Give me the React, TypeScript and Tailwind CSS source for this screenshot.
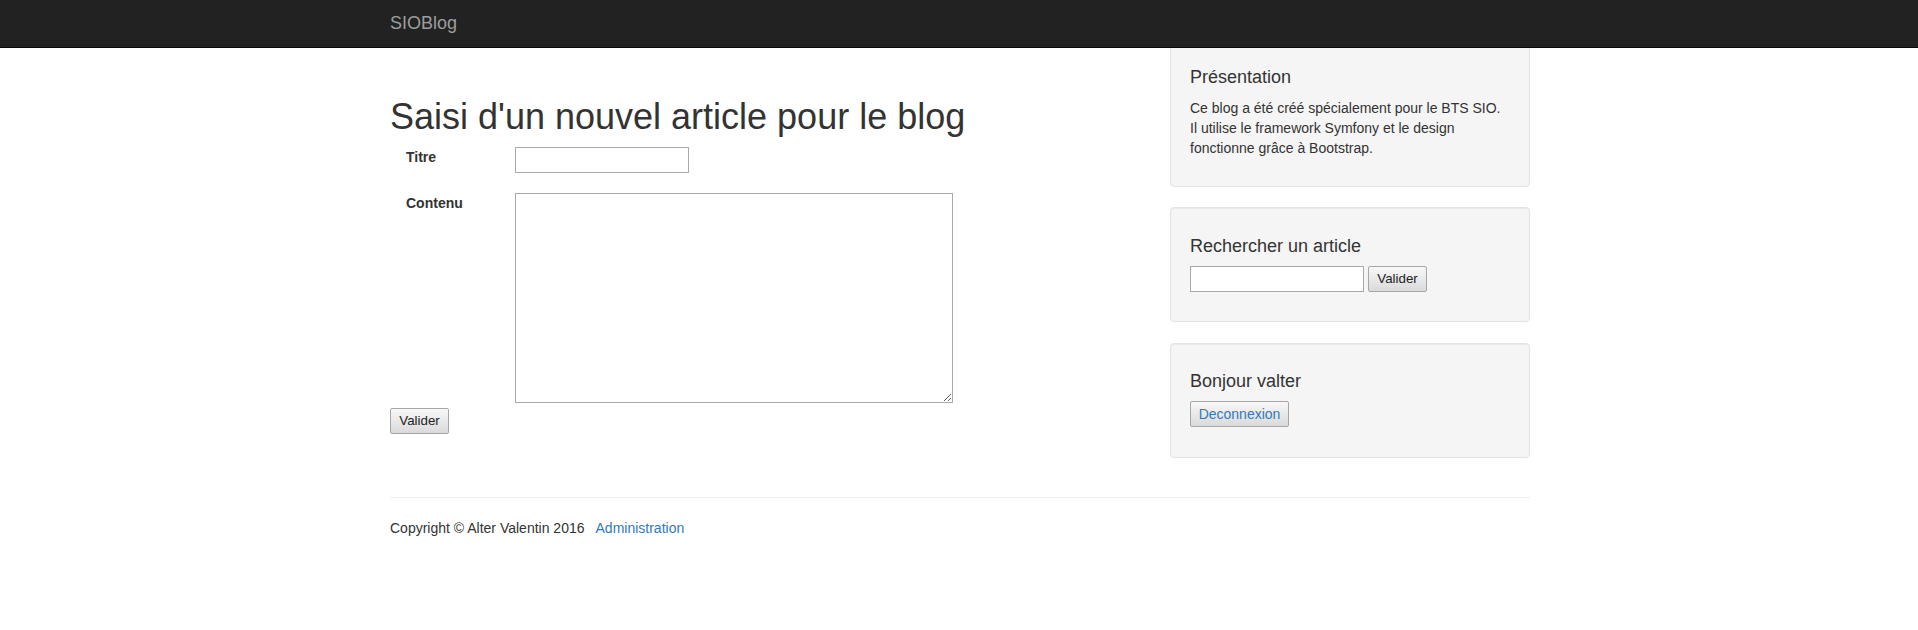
import React from "react";

const btn =
  "bg-linear-to-b from-[#f8f8f8] to-[#dadada] border border-[#a6a6a6] rounded-[2px] flex items-center justify-center leading-none";

const well =
  "bg-[#f5f5f5] border border-[#e3e3e3] rounded-[4px] shadow-[inset_0_1px_1px_rgba(0,0,0,0.05)] px-[19px]";

export default function App() {
  return (
    <div className="font-['Liberation_Sans',Arial,sans-serif] text-[14px] text-[#333] bg-white min-h-[630px]">
      <nav className="fixed top-0 inset-x-0 h-[48px] bg-[#222] border-b border-[#080808] z-10">
        <div className="pl-[2px]">
          <div className="w-[1140px] mx-auto h-[47px] flex items-center">
            <span className="text-[18px] text-[#9d9d9d]">SIOBlog</span>
          </div>
        </div>
      </nav>

      <div className="pl-[2px]">
        <div className="w-[1140px] mx-auto pt-[37px]">
          <div className="flex items-start gap-[31px]">
            <main className="w-[749px] pt-[60px]">
              <h1 className="text-[36px] leading-[39.6px] mb-[10px] text-[#333]">
                Saisi d'un nouvel article pour le blog
              </h1>
              <div className="flex items-start">
                <label className="w-[125px] pl-[16px] mt-[2px] text-[14px] leading-[16px] font-bold text-[#333]">
                  Titre
                </label>
                <input
                  type="text"
                  className="w-[174px] h-[26px] border border-[#a9a9a9] bg-white outline-none"
                />
              </div>
              <div className="flex items-start mt-[20px]">
                <label className="w-[125px] pl-[16px] mt-[2px] text-[14px] leading-[16px] font-bold text-[#333]">
                  Contenu
                </label>
                <textarea className="w-[438px] h-[210px] border border-[#a9a9a9] bg-white outline-none resize" />
              </div>
              <button className={`${btn} mt-[5px] w-[59px] h-[26px] text-[13.33px] text-[#222]`}>
                Valider
              </button>
            </main>

            <aside className="w-[360px]">
              <div className={`${well} h-[150px] mb-[20px] pt-[19px]`}>
                <h4 className="text-[18px] leading-[20px] mt-[10px] mb-[11px]">Présentation</h4>
                <p className="text-[14px] leading-[20px]">
                  Ce blog a été créé spécialement pour le BTS SIO. Il utilise le framework Symfony et le
                  design fonctionne grâce à Bootstrap.
                </p>
              </div>
              <div className={`${well} h-[115px] mb-[21px] pt-[18px]`}>
                <h4 className="text-[18px] leading-[20px] mt-[10px] mb-[10px]">Rechercher un article</h4>
                <div className="flex items-center gap-[4px]">
                  <input
                    type="text"
                    className="w-[174px] h-[26px] border border-[#a9a9a9] bg-white outline-none"
                  />
                  <button className={`${btn} w-[59px] h-[26px] text-[13.33px] text-[#222]`}>Valider</button>
                </div>
              </div>
              <div className={`${well} h-[115px] mb-[19px] pt-[17px]`}>
                <h4 className="text-[18px] leading-[20px] mt-[10px] mb-[10px]">Bonjour valter</h4>
                <button className={`${btn} w-[99px] h-[26px] text-[14px] text-[#337ab7]`}>
                  Deconnexion
                </button>
              </div>
            </aside>
          </div>

          <footer>
            <hr className="mt-[20px] mb-[20px] border-0 border-t border-[#eee]" />
            <p className="leading-[20px]">
              Copyright © Alter Valentin 2016
              <a className="ml-[11px] text-[#337ab7]" href="#">
                Administration
              </a>
            </p>
          </footer>
        </div>
      </div>
    </div>
  );
}
